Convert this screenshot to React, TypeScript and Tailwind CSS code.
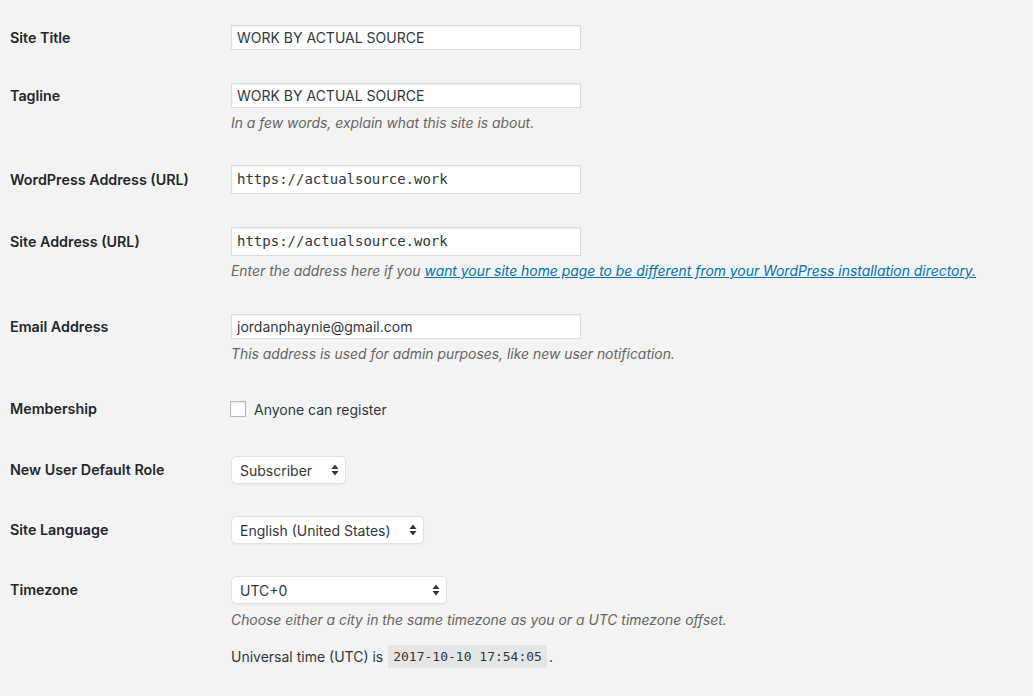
import React from "react";

const sans = { fontFamily: "Inter, 'Liberation Sans', sans-serif" } as React.CSSProperties;

function Arrows() {
  return (
    <svg width="8" height="12" viewBox="0 0 8 12" className="shrink-0">
      <path d="M4 0.5 L7.5 5 L0.5 5 Z" fill="#32373c" />
      <path d="M4 11.5 L7.5 7 L0.5 7 Z" fill="#32373c" />
    </svg>
  );
}

function Row({
  label,
  h,
  mt,
  children,
}: {
  label: string;
  h: number;
  mt: string;
  children: React.ReactNode;
}) {
  return (
    <div className={`flex ${mt}`}>
      <div
        className="w-[231px] shrink-0 pl-[10px] flex items-center text-[14.3px] font-semibold text-[#23282d]"
        style={{ height: h }}
      >
        {label}
      </div>
      <div className="flex flex-col">{children}</div>
    </div>
  );
}

function TextInput({ value, mono, h }: { value: string; mono?: boolean; h: number }) {
  return (
    <div
      className={`w-[350px] bg-white border border-[#dcdcdc] shadow-[inset_0_1px_2px_rgba(0,0,0,0.07)] pl-[5px] flex items-center text-[#32373c] ${
        mono ? "font-['DejaVu_Sans_Mono',monospace] text-[14px]" : "text-[14px]"
      }`}
      style={{ height: h }}
    >
      {value}
    </div>
  );
}

function Select({ value, w }: { value: string; w: number }) {
  return (
    <div
      className="h-[28px] bg-white border border-[#e2e2e2] rounded-[5px] shadow-[0_1px_1px_rgba(0,0,0,0.04)] pl-[8px] pr-[6px] flex items-center justify-between text-[14px] text-[#32373c]"
      style={{ width: w }}
    >
      <span>{value}</span>
      <Arrows />
    </div>
  );
}

function Desc({ children }: { children: React.ReactNode }) {
  return (
    <p className="mt-[6px] text-[13.9px] leading-[19px] italic text-[#666666] whitespace-nowrap">{children}</p>
  );
}

export default function App() {
  return (
    <div className="min-h-[696px] w-full bg-[#f3f3f3] pt-[25px]" style={sans}>
      <Row label="Site Title" h={25} mt="mt-0">
        <TextInput value="WORK BY ACTUAL SOURCE" h={25} />
      </Row>
      <Row label="Tagline" h={25} mt="mt-[33px]">
        <TextInput value="WORK BY ACTUAL SOURCE" h={25} />
        <Desc>In a few words, explain what this site is about.</Desc>
      </Row>
      <Row label="WordPress Address (URL)" h={29} mt="mt-[32px]">
        <TextInput value="https://actualsource.work" mono h={29} />
      </Row>
      <Row label="Site Address (URL)" h={29} mt="mt-[33px]">
        <TextInput value="https://actualsource.work" mono h={29} />
        <Desc>
          Enter the address here if you{" "}
          <a className="text-[#0073aa] underline" href="#">
            want your site home page to be different from your WordPress installation directory.
          </a>
        </Desc>
      </Row>
      <Row label="Email Address" h={25} mt="mt-[33px]">
        <TextInput value="jordanphaynie@gmail.com" h={25} />
        <Desc>This address is used for admin purposes, like new user notification.</Desc>
      </Row>
      <Row label="Membership" h={28} mt="mt-[31px]">
        <div className="h-[28px] flex items-center">
          <div className="w-[16px] h-[16px] bg-white border border-[#b4b9be] shadow-[inset_0_1px_2px_rgba(0,0,0,0.1)] -ml-px" />
          <span className="ml-[8px] text-[14px] text-[#32373c]">Anyone can register</span>
        </div>
      </Row>
      <Row label="New User Default Role" h={28} mt="mt-[33px]">
        <Select value="Subscriber" w={115} />
      </Row>
      <Row label="Site Language" h={28} mt="mt-[32px]">
        <Select value="English (United States)" w={193} />
      </Row>
      <Row label="Timezone" h={28} mt="mt-[32px]">
        <Select value="UTC+0" w={216} />
        <p className="mt-[7px] text-[13.9px] leading-[19px] italic text-[#666666] whitespace-nowrap">
          Choose either a city in the same timezone as you or a UTC timezone offset.
        </p>
        <div className="mt-[15px] flex items-center text-[14px] text-[#32373c] h-[23px]">
          <span>Universal time (UTC) is</span>
          <code className="ml-[5px] h-[23px] px-[5px] flex items-center bg-[#e5e5e5] font-['DejaVu_Sans_Mono',monospace] text-[13px] text-[#32373c]">
            2017-10-10 17:54:05
          </code>
          <span className="ml-[2px]">.</span>
        </div>
      </Row>
    </div>
  );
}
